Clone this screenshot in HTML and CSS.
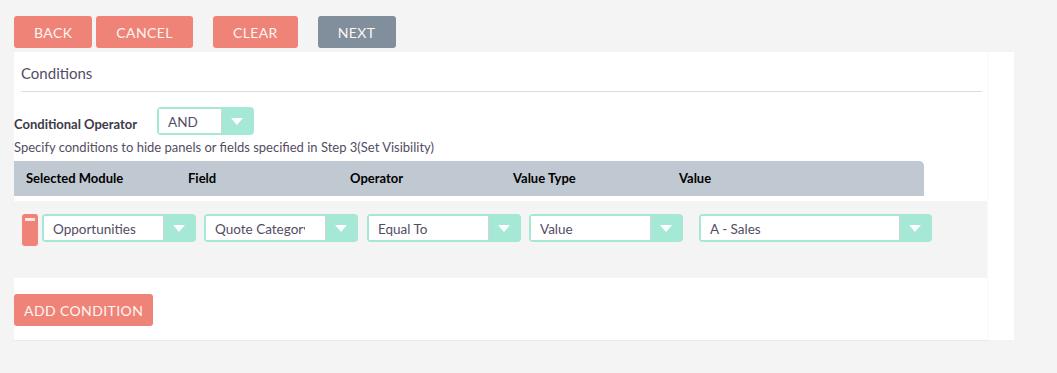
FILE: index.html
```html
<!DOCTYPE html>
<html lang="en">
<head>
    <meta charset="UTF-8">
    <meta name="viewport" content="width=device-width, initial-scale=1.0">
    <title>Conditions</title>
    <link rel="stylesheet" href="styles.css">
</head>
<body>

    <!-- Wizard Actions -->
    <div class="actions">
        <button class="btn">Back</button>
        <button class="btn btn-near">Cancel</button>
        <button class="btn btn-far">Clear</button>
        <button class="btn btn-far btn-next">Next</button>
    </div>

    <div class="panel">
        <div class="card">
            <div class="title">Conditions</div>

            <!-- Conditional Operator -->
            <div class="operator-row">
                <label class="operator-label">Conditional Operator</label>
                <div class="select select-small">
                    <span class="select-text"><span class="select-value">AND</span></span>
                    <span class="select-arrow"><svg width="12" height="7" viewBox="0 0 12 7"><polygon points="0,0 12,0 6,7" fill="#fff"/></svg></span>
                </div>
            </div>
            <p class="hint">Specify conditions to hide panels or fields specified in Step 3(Set Visibility)</p>

            <!-- Conditions Table -->
            <div class="cond-header">
                <span>Selected Module</span>
                <span>Field</span>
                <span>Operator</span>
                <span>Value Type</span>
                <span>Value</span>
            </div>

            <div class="cond-row">
                <div class="remove-btn"><span></span></div>
                <div class="select">
                    <span class="select-text"><span class="select-value">Opportunities</span></span>
                    <span class="select-arrow"><svg width="12" height="7" viewBox="0 0 12 7"><polygon points="0,0 12,0 6,7" fill="#fff"/></svg></span>
                </div>
                <div class="select">
                    <span class="select-text"><span class="select-value">Quote Category</span></span>
                    <span class="select-arrow"><svg width="12" height="7" viewBox="0 0 12 7"><polygon points="0,0 12,0 6,7" fill="#fff"/></svg></span>
                </div>
                <div class="select select-op">
                    <span class="select-text"><span class="select-value">Equal To</span></span>
                    <span class="select-arrow"><svg width="12" height="7" viewBox="0 0 12 7"><polygon points="0,0 12,0 6,7" fill="#fff"/></svg></span>
                </div>
                <div class="select">
                    <span class="select-text"><span class="select-value">Value</span></span>
                    <span class="select-arrow"><svg width="12" height="7" viewBox="0 0 12 7"><polygon points="0,0 12,0 6,7" fill="#fff"/></svg></span>
                </div>
                <div class="select select-wide">
                    <span class="select-text"><span class="select-value">A - Sales</span></span>
                    <span class="select-arrow"><svg width="12" height="7" viewBox="0 0 12 7"><polygon points="0,0 12,0 6,7" fill="#fff"/></svg></span>
                </div>
            </div>

            <button class="btn btn-add">Add Condition</button>
        </div>
    </div>

</body>
</html>
```

FILE: styles.css
```css
body {
    font-family: 'Lato', 'Open Sans', sans-serif;
    background: #f4f4f4;
    margin: 0;
    padding: 16px 14px;
    color: #534d64;
}

/* Buttons */
.actions {
    display: flex;
}

.btn {
    font-family: inherit;
    height: 32px;
    padding: 0 20px;
    font-size: 14px;
    letter-spacing: 0.4px;
    text-transform: uppercase;
    background-color: #f08377;
    color: #fdf6f3;
    border: none;
    border-radius: 3px;
    cursor: pointer;
}

.btn-near {
    margin-left: 4px;
}

.btn-far {
    margin-left: 20px;
}

.btn-next {
    background-color: #808f9b;
}

/* Panel */
.panel {
    margin-top: 4px;
    width: 1000px;
    background: #fff;
}

.card {
    width: 973px;
    padding-bottom: 14px;
    border-right: 1px solid #fafafa;
    box-shadow: 0 1px 1px rgba(0, 0, 0, 0.04);
}

.title {
    margin: 0 5px 0 7px;
    padding: 11px 0 8px;
    font-size: 15px;
    line-height: 20px;
    color: #534d64;
    border-bottom: 1px solid #dcdcdc;
}

/* Conditional Operator */
.operator-row {
    display: flex;
    align-items: center;
    margin-top: 15px;
}

.operator-label {
    width: 143px;
    padding-top: 5px;
    font-size: 13px;
    font-weight: bold;
    color: #3d3a4a;
}

.hint {
    margin: 4px 0 6px;
    font-size: 13px;
    line-height: 16px;
    color: #534d64;
}

/* Select */
.select {
    display: flex;
    box-sizing: border-box;
    width: 154px;
    height: 28px;
    background: #a5e8d6;
    border: 2px solid #a5e8d6;
    border-radius: 4px;
}

.select-small {
    width: 97px;
}

.select-wide {
    width: 233px;
}

.select-text {
    flex: 1;
    min-width: 0;
    padding: 0 20px 0 9px;
    background: #fff;
    border-right: 1px solid #d4d4d4;
}

.select-value {
    display: block;
    overflow: hidden;
    white-space: nowrap;
    font-size: 13.5px;
    line-height: 26px;
    color: #534d64;
}

.select-small .select-text {
    padding-right: 8px;
}

.select-arrow {
    width: 30px;
    display: flex;
    align-items: center;
    justify-content: center;
}

/* Conditions Table */
.cond-header {
    display: grid;
    grid-template-columns: 162px 162px 163px 166px 1fr;
    width: 910px;
    box-sizing: border-box;
    height: 35px;
    padding-left: 12px;
    background: #c0c9d1;
    border-top-right-radius: 5px;
    font-size: 13px;
    font-weight: bold;
    line-height: 35px;
    color: #000;
}

.cond-row {
    display: flex;
    align-items: flex-start;
    height: 77px;
    box-sizing: border-box;
    margin-top: 5px;
    padding: 13px 0 0 8px;
    background: #f4f4f4;
}

.cond-row .select {
    margin-left: 8px;
}

.cond-row .remove-btn + .select {
    margin-left: 4px;
}

.cond-row .select-op {
    margin-left: 9px;
}

.cond-row .select-wide {
    margin-left: 16px;
}

.remove-btn {
    width: 16px;
    height: 32px;
    background: #f08377;
    border-radius: 3px;
}

.remove-btn span {
    display: block;
    width: 10px;
    height: 3px;
    margin: 4px 0 0 3px;
    background: #fde8e4;
}

.btn-add {
    margin-top: 16px;
    padding: 0 10px;
}
```
